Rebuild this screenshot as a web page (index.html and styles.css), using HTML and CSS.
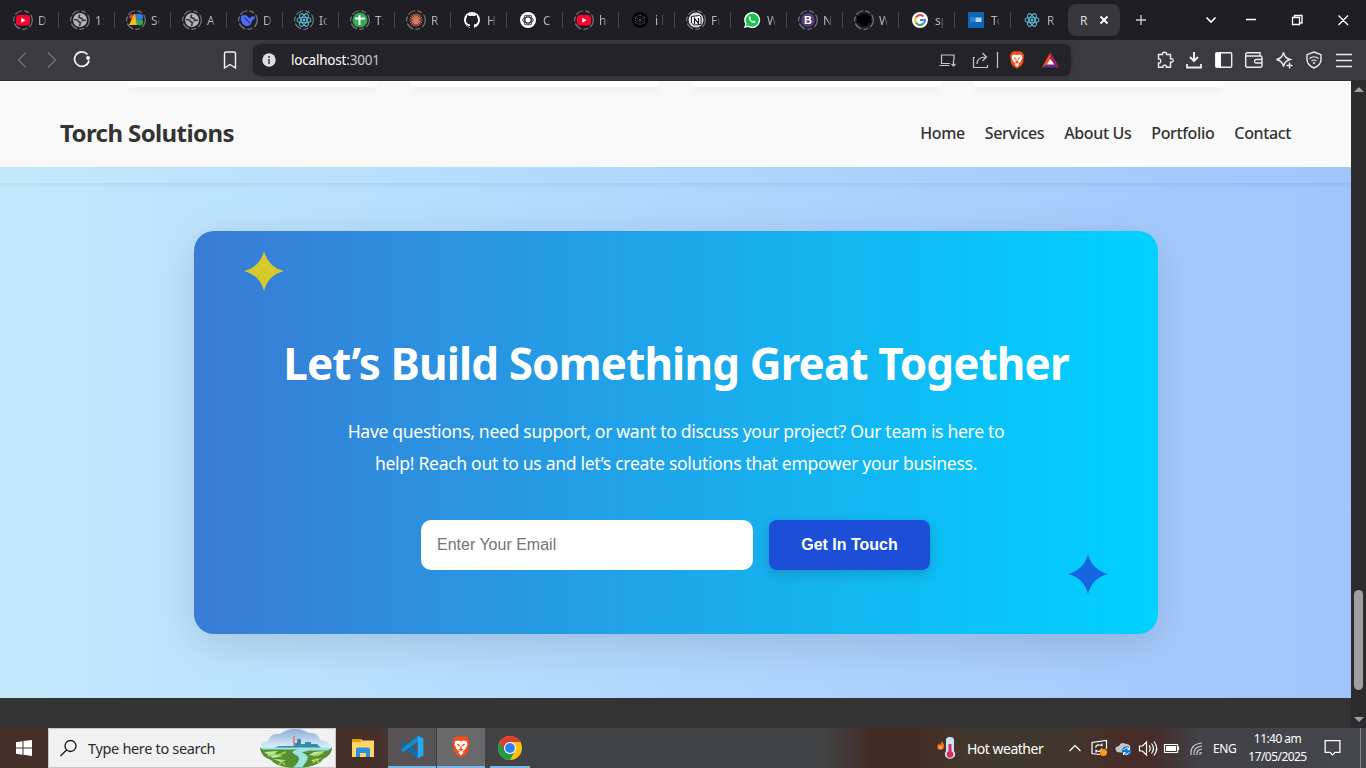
FILE: index.html
```html
<!DOCTYPE html>
<html lang="en">
<head>
<meta charset="utf-8">
<title>Torch Solutions</title>
<link rel="stylesheet" href="styles.css">
</head>
<body>
<svg class="defs" width="0" height="0">
  <symbol id="ring" viewBox="0 0 24 24"><circle cx="12" cy="12" r="9.3" fill="none" stroke="#77777a" stroke-width="1.2" stroke-dasharray="8 2.2 5 2.2"/></symbol>
  <symbol id="yt" viewBox="0 0 24 24"><rect x="5" y="7" width="14" height="10.5" rx="3" fill="#ff0033"/><path d="M10.3 9.8v5l4.2-2.5z" fill="#fff"/></symbol>
  <symbol id="globe" viewBox="0 0 24 24"><circle cx="12" cy="12" r="7" fill="#b4b4b4"/><path d="M6 11.500l3.500.5 1.500 2 1.500.5-1 3.500M11.500 6.500l-.5 3 3 1 .5 2 3.500-.5" fill="none" stroke="#3a3a3d" stroke-width="1.7"/></symbol>
  <symbol id="react" viewBox="0 0 24 24"><g fill="none" stroke="#58b4cc" stroke-width="1.1"><ellipse cx="12" cy="12" rx="7" ry="2.8"/><ellipse cx="12" cy="12" rx="7" ry="2.8" transform="rotate(60 12 12)"/><ellipse cx="12" cy="12" rx="7" ry="2.8" transform="rotate(120 12 12)"/></g><circle cx="12" cy="12" r="1.5" fill="#58c4dc"/></symbol>
  <symbol id="brave" viewBox="0 0 24 28"><path d="M7 1h10l3 2 2 4-1 11-3 5-6 4-6-4-3-5L2 7l2-4z" fill="#fb4b12"/><path d="M5 7l4-1 3 1 3-1 4 1 1 4-3 6-3 2.500 1 2-3 2.500-3-2.500 1-2L7 17l-3-6z" fill="#fff"/><path d="M6.500 10l4 1-.5 3zM17.500 10l-4 1 .5 3zM12 10l-1 6-2.500 1L12 19l3.500-2-2.500-1z" fill="#fb4b12"/></symbol>
</svg>

<div class="tabs">
  <div class="tab first"><svg class="fav"><use href="#ring"/><use href="#yt"/></svg><span>D</span></div>
  <div class="tab"><svg class="fav"><use href="#ring"/><use href="#globe"/></svg><span>1:</span></div>
  <div class="tab"><svg class="fav" viewBox="0 0 24 24"><use href="#ring"/><circle cx="7.500" cy="8.500" r="2.300" fill="#e84435"/><path d="M10 6h3.500v11H5z" fill="#fbb908"/><path d="M12.500 6h4a3 3 0 0 1 2 5h-6z" fill="#2f7de9"/><path d="M11 6h3l-1 5 3 6h-3z" fill="#2477d4"/><circle cx="16" cy="14.200" r="3.200" fill="#27a854"/></svg><span>Se</span></div>
  <div class="tab"><svg class="fav"><use href="#ring"/><use href="#globe"/></svg><span>A</span></div>
  <div class="tab"><svg class="fav" viewBox="0 0 24 24"><use href="#ring"/><path d="M5 8c3-2 6-1 8 2 1 1 2 0 2-2 1 1 2 1 4 0 0 2-1 4-3 4 0 3-2 6-5 6-4 0-7-5-6-10z" fill="#4d6bfe"/><path d="M8 10c3 0 3 4 6 5" fill="none" stroke="#202034"/></svg><span>D</span></div>
  <div class="tab"><svg class="fav"><use href="#ring"/><use href="#react"/></svg><span>Ic</span></div>
  <div class="tab"><svg class="fav" viewBox="0 0 24 24"><use href="#ring"/><circle cx="12" cy="12" r="7.500" fill="#34a853"/><path d="M7 10.500h10M11.500 7v10" stroke="#fff" stroke-width="2"/></svg><span>T:</span></div>
  <div class="tab"><svg class="fav" viewBox="0 0 24 24"><use href="#ring"/><path d="M12 5.500v13M5.500 12h13M7.400 7.400l9.200 9.200M16.600 7.400l-9.200 9.200M9.500 6l5 12M14.500 6l-5 12M6 9.500l12 5M6 14.500l12-5" stroke="#d97757" stroke-width="1.200"/></svg><span>R</span></div>
  <div class="tab"><svg class="fav" viewBox="0 0 24 24"><circle cx="12" cy="12" r="8" fill="#fff"/><path d="M10 20.500v-4c-3-.5-4-2-4-4.500 0-1.300.4-2 1-2.700V7l2.500 1h5L17 7v2.300c.6.700 1 1.400 1 2.700 0 2.500-1 4-4 4.500v4z" fill="#202024"/><path d="M10 18.500c-2 .3-2.500-.8-3.500-1.800" fill="none" stroke="#202024"/></svg><span>H</span></div>
  <div class="tab"><svg class="fav" viewBox="0 0 24 24"><circle cx="12" cy="12" r="8" fill="#fff"/><g fill="none" stroke="#333" stroke-width="1"><ellipse cx="12" cy="12" rx="5.300" ry="3"/><ellipse cx="12" cy="12" rx="5.300" ry="3" transform="rotate(60 12 12)"/><ellipse cx="12" cy="12" rx="5.300" ry="3" transform="rotate(120 12 12)"/></g></svg><span>C</span></div>
  <div class="tab"><svg class="fav"><use href="#ring"/><use href="#yt"/></svg><span>ho</span></div>
  <div class="tab"><svg class="fav" viewBox="0 0 24 24"><circle cx="12" cy="12" r="8" fill="#050505"/><g fill="none" stroke="#777" stroke-width=".8" stroke-dasharray="1 1"><path d="M12 7l4.500 2.500v5L12 17l-4.500-2.500v-5zM7.500 9.500l9 5M16.500 9.500l-9 5M12 7v10"/></g></svg><span>i l</span></div>
  <div class="tab"><svg class="fav" viewBox="0 0 24 24"><use href="#ring"/><circle cx="12" cy="12" r="7.500" fill="#ddd"/><path d="M7.500 8.500l8-1 1.500 1.500v7.500l-7 .5-2.500-2z" fill="#fff" stroke="#222"/><path d="M10.500 16v-5.500l4 5V10" fill="none" stroke="#111" stroke-width="1.200"/></svg><span>Fu</span></div>
  <div class="tab"><svg class="fav" viewBox="0 0 24 24"><path d="M4 20l1.200-4A8 8 0 1 1 8 18.900z" fill="#fff"/><path d="M5.800 18.200l.8-2.600A6.600 6.600 0 1 1 8.500 17.600z" fill="#15c64d"/><path d="M9.200 8.500c-1 1-.5 3 1.300 4.700s3.700 2.300 4.700 1.200l.3-1-1.900-1-1 .9c-1-.4-1.700-1.100-2.200-2l.7-1-.8-1.800z" fill="#fff"/></svg><span>W</span></div>
  <div class="tab"><svg class="fav" viewBox="0 0 24 24"><use href="#ring"/><circle cx="12" cy="12" r="7" fill="#563d7c"/><text x="12" y="16" text-anchor="middle" class="bico">B</text></svg><span>N</span></div>
  <div class="tab"><svg class="fav" viewBox="0 0 24 24"><use href="#ring"/><path d="M5 8h3l1-2h6l1 2h3v7h-3l-1 3H9l-1-3H5z" fill="#030303"/></svg><span>W</span></div>
  <div class="tab"><svg class="fav" viewBox="0 0 24 24"><circle cx="12" cy="12" r="8" fill="#fff"/><g fill="none" stroke-width="2"><path d="M7.800 9.500A5 5 0 0 1 15.500 8.500" stroke="#ea4335"/><path d="M7.800 14.500a5 5 0 0 1 0-5" stroke="#fbbc05"/><path d="M15.500 15.600a5 5 0 0 1-7.700-1.100" stroke="#34a853"/><path d="M12 12h5a5 5 0 0 1-1.500 3.600" stroke="#4285f4"/></g></svg><span>sp</span></div>
  <div class="tab"><svg class="fav" viewBox="0 0 24 24"><path d="M4 4h16v16H4z" fill="#0c67ba"/><circle cx="8.500" cy="11.500" r="1.700" fill="none" stroke="#75aede"/><path d="M11.500 9.500h6V14h-6z" fill="#b4d4ef"/></svg><span>To</span></div>
  <div class="tab last"><svg class="fav"><use href="#react"/></svg><span>R</span></div>
  <div class="active"><span>R</span><svg width="10" height="10" viewBox="0 0 10 10"><path d="M1.500 1.500l7 7m0-7l-7 7" stroke="#fff" stroke-width="1.800"/></svg></div>
  <svg class="winctl" width="246" height="40" viewBox="1120 0 246 40" fill="none" stroke="#fff" stroke-width="1.300"><path d="M1136 20h10M1141 15v10" stroke="#ccc"/><path d="M1206.500 17.500l4.500 4.500 4.500-4.500" stroke-width="1.700"/><path d="M1246 19.500h10M1292.500 17.500h7v7h-7zM1294.500 17.500v-2h7.500v7.500h-2.500M1338.500 15.500l9.500 9.500m0-9.500l-9.500 9.500"/></svg>
</div>

<div class="toolbar">
  <svg width="253" height="40" viewBox="0 40 253 40" fill="none" stroke="#f4f4f4" stroke-width="1.500"><path d="M26 52.500L18.500 60l7.500 7.500M48 52.500l7.500 7.500-7.500 7.500" stroke="#77777c" stroke-width="1.200"/><path d="M87.500 54.500a7.300 7.300 0 1 0 1.500 6" stroke-width="1.700"/><circle cx="88" cy="58" r="1.900" fill="#fff" stroke="none"/><path d="M224.500 53.500q0-1.500 1.500-1.500h8q1.500 0 1.500 1.500V68l-5.500-3.500-5.500 3.500z" stroke-width="1.400"/></svg>
  <div class="address">
    <svg width="14" height="14" viewBox="0 0 14 14"><circle cx="7" cy="7" r="6.700" fill="#dedee2"/><path d="M7 3v2M7 6v5" stroke="#555" stroke-width="1.800"/></svg>
    <span class="url">localhost<b>:3001</b></span>
    <svg width="140" height="32" viewBox="931 44 140 32" fill="none" stroke="#c7c7cb" stroke-width="1.200"><path d="M950 63.500h-8.500v-8.500h12.500v5M939.500 65.500h10M953.500 60v6m-2-2l2 2 2-2M975 57.500h-1.500v10h14v-2.500M977 64c0-5 3-7 9-7M982.500 53l4 4-4 4"/><path d="M997.500 52v16"/><use href="#brave" x="1008.500" y="50.500" width="17" height="19" stroke="none"/><g stroke="none"><path d="M1050.500 52l-8.500 15.500 8.500-5z" fill="#ff4f18"/><path d="M1050.500 52l8.500 15.500-8.500-5z" fill="#9e1f63"/><path d="M1042 67.500h17l-8.500-5.500z" fill="#662d91"/><path d="M1050.500 59l-3.700 5.500h7.400z" fill="#fff"/></g></svg>
  </div>
  <svg width="295" height="40" viewBox="1071 40 295 40" fill="none" stroke="#ececef" stroke-width="1.400"><path d="M1158.500 54.500h4q-.5-2.300 2-2.300t2 2.300h4v4.300q2.700-.5 2.700 1.700t-2.700 1.700v5h-4q.5-2-1.800-2t-1.800 2h-4.400V63q2.200.3 2.200-2t-2.200-2z"/><path d="M1194 52v9m-4-4l4 4 4-4" stroke-width="2"/><path d="M1187 64v3.500h14V64" stroke-width="1.800"/><rect x="1215.700" y="52.700" width="16" height="14.500" rx="1"/><path d="M1216 53h5v14h-5z" fill="#fff" stroke="none"/><path d="M1260 56v-3.300h-12.500q-1.800 0-1.800 1.800v11q0 1.800 1.800 1.800h12.800q1.700 0 1.700-1.800v-7.800q0-1.700-1.700-1.700H1246M1262 59.500h-6q-1.500 0-1.500 1.800 0 1.700 1.500 1.700h6"/><path d="M1283.500 52.500q1 5.500 6.500 7-5.500 1.500-6.500 7-1-5.500-7-7 6-1.500 7-7zM1289.500 62.500v6m-3-3h6"/><path d="M1314 52l7 2.700v5q0 5-7 8.300-7-3.300-7-8.300v-5z"/><path d="M1309.500 58.500q4.500-3.500 9 0M1311.500 61q2.500-2 5 0" stroke-width="1.200"/><circle cx="1314" cy="63" r="1" fill="#fff" stroke="none"/><path d="M1336 54.500h16M1336 60.500h16M1336 66.500h16" stroke-width="1.300"/></svg>
</div>

<div class="viewport">
  <div class="page">
    <header class="site-header"><div class="brand">Torch Solutions</div><nav><a>Home</a><a>Services</a><a>About Us</a><a>Portfolio</a><a>Contact</a></nav></header>
    <section class="features"><div class="feature"></div><div class="feature"></div><div class="feature"></div><div class="feature"></div></section>
    <section class="contact">
      <div class="cta">
        <svg class="star star-a" viewBox="0 0 40 40"><path d="M20 0Q24 16 40 20 24 24 20 40 16 24 0 20 16 16 20 0z" fill="#d7c82c"/></svg>
        <h1>Let’s Build Something Great Together</h1>
        <p>Have questions, need support, or want to discuss your project? Our team is here to<br>help! Reach out to us and let’s create solutions that empower your business.</p>
        <form><input type="email" placeholder="Enter Your Email"><button type="button">Get In Touch</button></form>
        <svg class="star star-b" viewBox="0 0 40 40"><path d="M20 0Q24 16 40 20 24 24 20 40 16 24 0 20 16 16 20 0z" fill="#1765e2"/></svg>
      </div>
    </section>
    <footer></footer>
  </div>
  <div class="scrollbar"><i class="up"></i><i class="thumb"></i><i class="down"></i></div>
</div>

<div class="taskbar">
  <svg class="start" width="48" height="40" viewBox="0 0 48 40"><path d="M16 14.300l6.500-1v6.200H16zM23.500 13.100L32 12v7.500h-8.500zM16 20.500h6.500v6.200l-6.500-1zM23.500 20.500H32V28l-8.500-1.200z" fill="#fff"/></svg>
  <div class="search">
    <svg width="39" height="38" viewBox="0 0 39 38" fill="none" stroke="#111" stroke-width="1.300"><circle cx="21.500" cy="17" r="5.500"/><path d="M17.500 21L11.500 27"/></svg>
    <span class="hint">Type here to search</span>
    <svg class="scene" width="74" height="39" viewBox="0 0 74 39"><defs><linearGradient id="sky" x2="0" y2="1"><stop stop-color="#8eabdb"/><stop offset="1" stop-color="#e3f6fb"/></linearGradient></defs><path d="M2 20Q0 13 9 12q3-9 12-7Q28 0 36 0t14 4q9-1 11 7 11 1 11 9z" fill="url(#sky)"/><path d="M15 19l5-2h15v-3h3v-3q2-3 4 0v4h4v-2h6v2h6l4 4z" fill="#378aa5"/><path d="M34 7h2v10h-2z" fill="#cf8d86"/><path d="M1 19h72q0 7-9 11-5 8-24 9-22 0-28-8Q2 28 1 19z" fill="#568f32"/><path d="M1 18.500h72l-4 3H50l-7 2q8 3 5 8l-5 7h-9q11-9 2-13-6-3 3-5H4z" fill="#9ce3e5"/><path d="M5 23l14-1-4 3 9 2-10 2zM55 23l11-1-7 5-9-1zM14 30l13 1-5 2zM52 31l11-2-8 4z" fill="#bce6b0"/><path d="M9 27l8-2M27 23l-8 3M54 27l10-3M20 36l3-4 3 4M54 34l3-4 3 4" fill="none" stroke="#b2ce32" stroke-width="1.500"/></svg>
  </div>
  <svg class="app" width="52" height="40" viewBox="336 728 52 40"><path d="M352 739h9l1.500 1.500H374v16.500h-22z" fill="#ffd568"/><path d="M352 739h9v3h-9z" fill="#e8a000"/><path d="M356 757v-7.500q0-2 2-2h10q2 0 2 2v7.500h-4v-4h-6v4z" fill="#2490df"/></svg>
  <svg class="app running" width="48" height="40" viewBox="0 0 48 40"><path d="M12 16.500l2.500-2L31 26v6L12 17z" fill="#0072b8"/><path d="M12 23.500l2.500 2L31 14V8L12 23z" fill="#118bd3"/><path d="M30 8l6 3v18l-6 3z" fill="#26a9f3"/></svg>
  <svg class="app running current" width="48" height="40" viewBox="0 0 48 40"><use href="#brave" x="13" y="8" width="22" height="24"/></svg>
  <svg class="app chrome" width="50" height="40" viewBox="0 0 50 40"><circle cx="25" cy="20" r="12" fill="#fbc116"/><path d="M25 20L14.600 14A12 12 0 0 0 25 32l5-9z" fill="#229a4b"/><path d="M25 14h10.400A12 12 0 0 0 14.600 14l5.200 9z" fill="#e33b2e"/><circle cx="25" cy="20" r="6" fill="#fff"/><circle cx="25" cy="20" r="4.900" fill="#2c80ed"/></svg>
  <div class="spacer"></div>
  <svg width="32" height="40" viewBox="935 728 32 40"><path d="M941.500 741q4 4 2.500 6.500-1.500 2.500-3.500 2.500-3.500-.5-3.300-3.500.2-2.500 2.300-3.500 0 2 .5 2.200 1.300-1.500 1.500-4.200z" fill="#f36a2b"/><circle cx="940.500" cy="747.500" r="1.400" fill="#ffbd45"/><path d="M946 740q0-3 4-3t4 3v11q2 2 1 5-2 3-5 3t-5-3q-1-3 1-5z" fill="#c9e4f6"/><path d="M948.500 744h3v9h-3z" fill="#dd2d51"/><circle cx="950" cy="754.500" r="3.300" fill="#dd2d51"/></svg>
  <span class="weather">Hot weather</span>
  <svg class="tray" width="146" height="40" viewBox="1064 728 146 40" fill="none" stroke="#fff" stroke-width="1.200"><path d="M1069.500 751l5.500-5.500 5.500 5.500"/><path d="M1106.500 749v-8.500l-14.500 2v11l8 1M1095.500 747.500q1-3 4-2.500l2.500.5v-2m0 5q-1 3-3.500 3l-2.500-1v2"/><circle cx="1103.500" cy="752.500" r="3.500" fill="#ff980f" stroke="none"/><path d="M1117 752q-4-5 2-6 2-5 7-2 5 0 4 5l-5 4z" fill="#c7c7c7" stroke="none"/><circle cx="1126.500" cy="751" r="4.700" fill="#1473cf" stroke="none"/><path d="M1123.500 750q3-4 6-1m0-2v2.500h-2M1129.500 752q-3 4-6 1m0 2v-2.500h2" stroke-width="1"/><path d="M1139.500 746h3l4-4v13l-4-4h-3zM1149 745.500q2.500 3 0 6M1151.500 743.500q4 5 0 10M1154 741.500q5.500 7 0 14"/><path d="M1164.500 744.500h13v8h-13z"/><path d="M1166 746h10v5h-10z" fill="#fff" stroke="none"/><path d="M1178.500 746.500v3.500"/><path d="M1191 755q-1-11 11-12M1194 755q-1-8 8-9M1197 755q-1-5 5-6M1200 755v-2l2-.5" stroke="#ccc"/></svg>
  <span class="lang">ENG</span>
  <div class="clock"><span>11:40 am</span><span>17/05/2025</span></div>
  <svg class="note" width="52" height="40" viewBox="1309 728 52 40" fill="none" stroke="#fff" stroke-width="1.300"><path d="M1325.500 740.500h15v12h-5l-2.500 2.500-2.500-2.500h-5z"/></svg>
</div>
</body>
</html>
```

FILE: styles.css
```css
* { box-sizing: border-box; }
body { margin: 0; width: 1366px; height: 768px; overflow: hidden; display: flex; flex-direction: column; font-family: "Noto Sans", sans-serif; }
svg { display: block; flex: none; }
.defs { position: absolute; }

.tabs { height: 40px; background: #1f1e24; display: flex; align-items: center; padding-left: 3px; }
.tab { width: 56px; height: 40px; display: flex; align-items: center; padding-left: 9px; flex: none; background: linear-gradient(#45454a, #45454a) 55px 12px / 1px 16px no-repeat; color: #b6b6ba; font-size: 12px; }
.tab.last { background: none; }
.tab.first { padding-left: 8px; }
.tab span { margin-left: 3px; width: 9px; overflow: hidden; white-space: nowrap; mask-image: linear-gradient(90deg, #000 50%, transparent); }
.fav { width: 24px; height: 24px; }
.bico { font: bold 11px "Liberation Sans", sans-serif; fill: #fff; }
.active { width: 52px; height: 32px; margin-left: 1px; flex: none; background: #37373b; border-radius: 8px; display: flex; align-items: center; padding-left: 12px; font-size: 12px; color: #ddd; }
.active span { width: 8px; margin-right: 11px; }

.toolbar { height: 41px; background: #3b3a3f; display: flex; align-items: center; border-bottom: 1px solid #302d34; }
.address { width: 818px; height: 32px; background: #242328; border-radius: 8px; display: flex; align-items: center; padding-left: 9px; box-shadow: 0 0 3px #2a2a2e; }
.url { margin-left: 15px; flex: 1; font-size: 13.5px; letter-spacing: -0.2px; color: #fff; }
.url b { font-weight: 400; color: #c9c9cc; }

.viewport { height: 647px; display: flex; }
.page { width: 1351px; position: relative; overflow: hidden; }
.site-header { position: absolute; inset: 0 0 auto; height: 102px; padding: 2px 60px 0; display: flex; align-items: center; justify-content: space-between; box-shadow: 0 2px 5px rgba(0, 0, 0, .07); color: #333; z-index: 2; }
.brand { font-size: 24px; font-weight: 700; letter-spacing: -0.6px; margin-bottom: 2px; }
nav { display: flex; gap: 20px; font-size: 16px; font-weight: 500; }
nav a { white-space: nowrap; letter-spacing: -0.37px; }
.features { height: 86px; background: #f9f9f9; display: flex; gap: 30.8px; padding-left: 126.5px; }
.feature { width: 251.5px; height: 6px; background: #fff; border-radius: 0 0 10px 10px; box-shadow: 0 4px 12px rgba(0, 0, 0, .06); }
.contact { height: 531px; padding: 64px 193px 0 194px; background: linear-gradient(90deg, #c2e9fb, #b2d8fe 45%, #a1c4fd); }
.cta { height: 403px; position: relative; background: linear-gradient(90deg, #3a7bd5, #00d2ff); border-radius: 20px; padding-top: 100px; text-align: center; color: #fff; box-shadow: 0 10px 40px rgba(0, 0, 0, .13); }
.star { position: absolute; width: 40px; height: 40px; }
.star-a { left: 50px; top: 20px; }
.star-b { right: 50px; bottom: 40px; }
h1 { margin: 0; font-size: 44px; line-height: 64px; font-weight: 700; letter-spacing: -0.87px; white-space: nowrap; }
p { margin: 20px 0 0; font-size: 17.6px; line-height: 32px; white-space: nowrap; letter-spacing: -0.33px; }
form { display: flex; justify-content: center; gap: 16px; margin: 41px 1px 0 0; }
input, button { height: 50px; border: 0; border-radius: 8px; font: 16px "Liberation Sans", sans-serif; }
input { width: 332px; padding: 0 16px; background: #fff; border-radius: 10px; }
input::placeholder { color: #757575; }
button { width: 161px; padding: 0; background: #1d4ed8; color: #fff; font-weight: 700; box-shadow: 0 4px 12px rgba(0, 0, 0, .16); }
footer { height: 30px; background: #333; }
.scrollbar { width: 15px; background: #2c2c2c; display: flex; flex-direction: column; align-items: center; padding: 6px 0; }
.up, .down { border: 5px solid transparent; border-top: 0; border-bottom: 5px solid #a0a0a0; }
.down { transform: rotate(180deg); margin-top: auto; }
.thumb { width: 9px; height: 100px; margin-top: 498px; border-radius: 5px; background: #9f9f9f; }

.taskbar { height: 40px; display: flex; align-items: center; color: #fff; background: linear-gradient(90deg, #452f28 0, #452f28 370px, #414244 430px, #414244 825px, #442c26 870px, #442c26 920px, #40382e 970px, #40382e 1060px, #482c28 1125px, #452e2b 1155px, #414147 1200px, #45474b 1366px); }
.search { width: 288px; height: 40px; background: #f1f1f1; border: 1px solid #c6c6c6; display: flex; align-items: center; }
.hint { flex: 1; font-size: 14.5px; letter-spacing: -0.33px; color: #2b2b2b; white-space: nowrap; }
.scene { margin-right: 2px; }
.running { background: #575354; border-bottom: 2px solid #76b9ed; margin-right: 1px; }
.running.current { background: #69696b; margin-right: 0; }
.chrome { background: linear-gradient(#76b9ed, #76b9ed) 5px 38px / 40px 2px no-repeat; }
.spacer { flex: 1; }
.weather { width: 97px; font-size: 14px; letter-spacing: -0.5px; white-space: nowrap; }
.lang { width: 36px; padding-left: 3px; font-size: 12px; letter-spacing: -0.4px; }
.clock { width: 63px; font-size: 12px; line-height: 18px; letter-spacing: -0.55px; display: flex; flex-direction: column; align-items: center; }
.note { border-right: 1px solid #85858a; margin-right: 5px; }
```
